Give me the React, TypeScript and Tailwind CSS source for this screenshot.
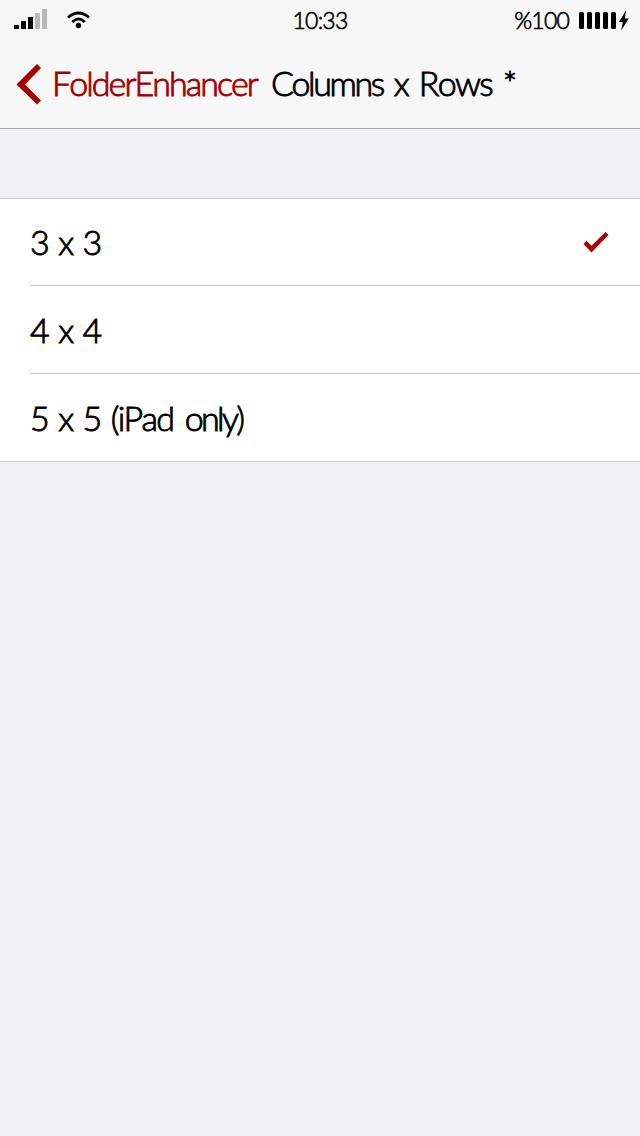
import { useState } from 'react';

const options = [
	{ label: "3 x 3", detail: "", last: "" },
	{ label: "4 x 4", detail: "", last: "" },
	{ label: "5 x 5", detail: "(iPad", last: "only)" },
];

function StatusBar(){
	return (
		<div className="h-10 grid grid-cols-3 items-center text-[23px] leading-10 [-webkit-text-stroke:0.6px]">
			<div className="flex items-center pl-[14px] gap-5">
				<svg width="33" height="20" viewBox="0 0 33 20" className="-mt-0.5">
					<path d="M0 16h5v4H0zM7 12h5v8H7zM14 8h5v12h-5z" fill="#000" />
					<path d="M21 4h5v16h-5zM28 0h5v20h-5z" fill="#b9b9b9" />
				</svg>
				<svg width="23" height="18" viewBox="0 0 23 18" fill="none" stroke="#000" strokeWidth="2.7">
					<path d="M1 6.500Q11.500 -2.500 22 6.500M5.200 11Q11.500 4.800 17.800 11" />
					<circle cx="11.500" cy="14.500" r="2.700" fill="#000" stroke="none" />
				</svg>
			</div>
			<span className="text-center tracking-[-0.8px]">10:33</span>
			<div className="flex items-center justify-end pr-[11px]">
				<span className="mr-[10px] tracking-[-0.8px]">%100</span>
				<div className="flex gap-[3px]">
					{[0, 1, 2, 3, 4].map((i) => <span key={i} className="w-[5px] h-[17px] rounded-[1.5px] bg-black"></span>)}
				</div>
				<svg width="10" height="21" viewBox="0 0 10 21" className="ml-[3px]">
					<path d="M7.200 0L0 12h3.800L2.200 20.500L9.800 8.500H5.800z" />
				</svg>
			</div>
		</div>
	);
}

function App(){
	const [selected, setSelected] = useState(0);

	return (
		<div className="min-h-screen w-full bg-[#efeff4] text-black font-light font-['Lato',sans-serif] [font-kerning:none] [font-variant-ligatures:none]">
			<header className="h-[129px] bg-[#f7f7f7] border-b border-[#a7a7aa]">
				<StatusBar />
				<div className="h-[88px] flex items-center text-[34px] leading-10 whitespace-nowrap [-webkit-text-stroke:0.9px]">
					<button className="flex items-center pl-4 text-[#a50000]">
						<svg width="26" height="42" viewBox="0 0 26 42" className="mr-[10px]">
							<path d="M21 1L25 5L9 21.500L25 37.500L21 41.500L0.500 21.500z" fill="#a50000" />
						</svg>
						<span className="pb-0.5 tracking-[-1.95px]">FolderEnhancer</span>
					</button>
					<h1 className="ml-[14px] pb-0.5 tracking-[-1.7px] [word-spacing:3.3px]">
						<span className="tracking-[-2.4px]">Columns</span> x Rows *
					</h1>
				</div>
			</header>
			<ul className="mt-[69px] bg-white border-y border-[#c8c7cc] text-[34px] leading-10">
				{options.map((option, i) => (
					<li key={option.label} className="pl-[30px]" onClick={() => setSelected(i)}>
						<div className={"flex items-center justify-between pr-[31px] " + (i == 0 ? "h-[86px]" : "h-[88px] border-t border-[#c8c7cc]")}>
							<span className="tracking-[-1px] [word-spacing:1.2px] [-webkit-text-stroke:0.9px]">
								{option.label} <span className="tracking-[-1.7px]">{option.detail}</span> <span className="ml-0.5 tracking-[-2.7px]">{option.last}</span>
							</span>
							{selected == i && <svg width="26" height="21" viewBox="0 0 26 21">
								<path d="M0.500 12L3.500 8.800L8.500 13.700L22.500 0L25.500 3L8.500 20.500z" fill="#a50000" />
							</svg>}
						</div>
					</li>
				))}
			</ul>
		</div>
	);
}

export default App;
